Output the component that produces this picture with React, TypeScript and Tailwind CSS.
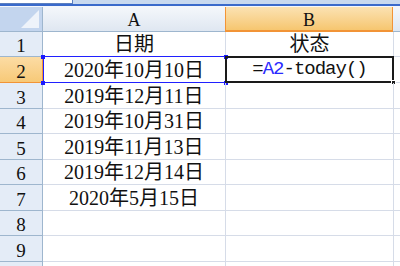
import React from "react";

const serif = { fontFamily: '"Liberation Serif", "Noto Sans CJK SC", serif' } as const;

type Row = { n: number; h: string; a?: string; b?: React.ReactNode; label?: boolean };

const rows: Row[] = [
  { n: 1, h: "h-[25px]", a: "日期", b: "状态" },
  { n: 2, h: "h-[26px]", a: "2020年10月10日", b: "formula" },
  { n: 3, h: "h-[26px]", a: "2019年12月11日" },
  { n: 4, h: "h-[25px]", a: "2019年10月31日" },
  { n: 5, h: "h-[26px]", a: "2019年11月13日" },
  { n: 6, h: "h-[25px]", a: "2019年12月14日" },
  { n: 7, h: "h-[26px]", a: "2020年5月15日" },
  { n: 8, h: "h-[25px]" },
  { n: 9, h: "h-[26px]" },
  { n: 10, h: "h-[26px]", label: false },
];

function Handle({ cls }: { cls: string }) {
  return <div className={`absolute w-[4px] h-[4px] bg-[#1a1aff] ${cls}`} />;
}

export default function App() {
  return (
    <div className="w-[400px] h-[266px] overflow-hidden bg-white text-[#111]" style={serif}>
      {/* top strip */}
      <div className="h-[7px] flex flex-col bg-[#f4f7fb]">
        <div className="h-[4px] flex bg-[#c8d9ef]">
          <div className="w-[73px] h-[4px] bg-white border-r border-b border-[#5b7fc0]" />
        </div>
        <div className="h-[2px] bg-[#3a6acb]" />
      </div>
      {/* header row */}
      <div className="flex h-[25px]">
        <div className="w-[43px] shrink-0 relative bg-[#c3d5ee] border-r border-b border-[#9eb6ce] overflow-hidden">
          <svg className="absolute right-[3px] bottom-[3px]" width="18" height="18" viewBox="0 0 18 18">
            <polygon points="18,0 18,18 0,18" fill="#eef3fa" />
          </svg>
        </div>
        <div className="w-[183px] shrink-0 flex items-center justify-center bg-gradient-to-b from-[#f4f7fb] to-[#dfe7f1] border-r border-b border-[#9eb6ce] text-[18px] leading-none pt-[2px]">
          A
        </div>
        <div className="w-[168px] shrink-0 flex items-center justify-center bg-gradient-to-b from-[#fbe2b2] to-[#f6c66f] border-x border-b-2 border-[#f29436] -ml-px text-[18px] leading-none pt-[2px]">
          B
        </div>
        <div className="flex-1 bg-gradient-to-b from-[#f4f7fb] to-[#dfe7f1] border-b border-[#9eb6ce]" />
      </div>
      {rows.map((r) => {
        const active = r.n === 2;
        return (
          <div key={r.n} className={`flex ${r.h}`}>
            <div
              className={`w-[43px] shrink-0 flex items-center justify-center border-r border-b text-[19px] leading-none pt-[3px] ${
                active
                  ? "bg-gradient-to-b from-[#fcdca4] to-[#f7c977] border-[#f29436]"
                  : "bg-[#e4ecf7] border-[#9eb6ce]"
              }`}
            >
              {r.label === false ? null : r.n}
            </div>
            <div className="w-[183px] shrink-0 relative flex items-end justify-center border-r border-b border-[#d6dce8] text-[20px] leading-none pb-[2px]">
              {r.a && <span className="whitespace-nowrap">{r.a}</span>}
              {active && (
                <>
                  <div className="absolute left-0 right-[-1px] top-[-1px] bottom-[-1px] border border-[#2020ff]" />
                  <div className="absolute right-[-1px] top-0 bottom-0 w-px bg-[#f0e000]" />
                  <Handle cls="left-[-2px] top-[-2px]" />
                  <Handle cls="left-[-2px] bottom-[-3px]" />
                  <Handle cls="right-[-3px] top-[-2px]" />
                  <Handle cls="right-[-3px] bottom-[-3px]" />
                </>
              )}
            </div>
            <div className="w-[168px] shrink-0 relative flex items-end justify-center border-r border-b border-[#d6dce8] text-[20px] leading-none pb-[2px]">
              {r.b === "formula" ? (
                <span
                  className="whitespace-nowrap text-[19px] tracking-[-1px] pb-[1px]"
                  style={{ fontFamily: '"Liberation Mono", monospace' }}
                >
                  =<span className="text-[#2a2aff]">A2</span>-today()
                </span>
              ) : (
                r.b && <span className="whitespace-nowrap">{r.b}</span>
              )}
              {active && (
                <>
                  <div className="absolute left-[-1px] right-[-1px] top-[-1px] bottom-[-1px] border-2 border-[#1a1a1a]" />
                  <div className="absolute right-[-3px] bottom-[-3px] w-[5px] h-[5px] bg-[#1a1a1a] border border-white" />
                </>
              )}
            </div>
            <div className="flex-1 border-b border-[#d6dce8]" />
          </div>
        );
      })}
    </div>
  );
}
